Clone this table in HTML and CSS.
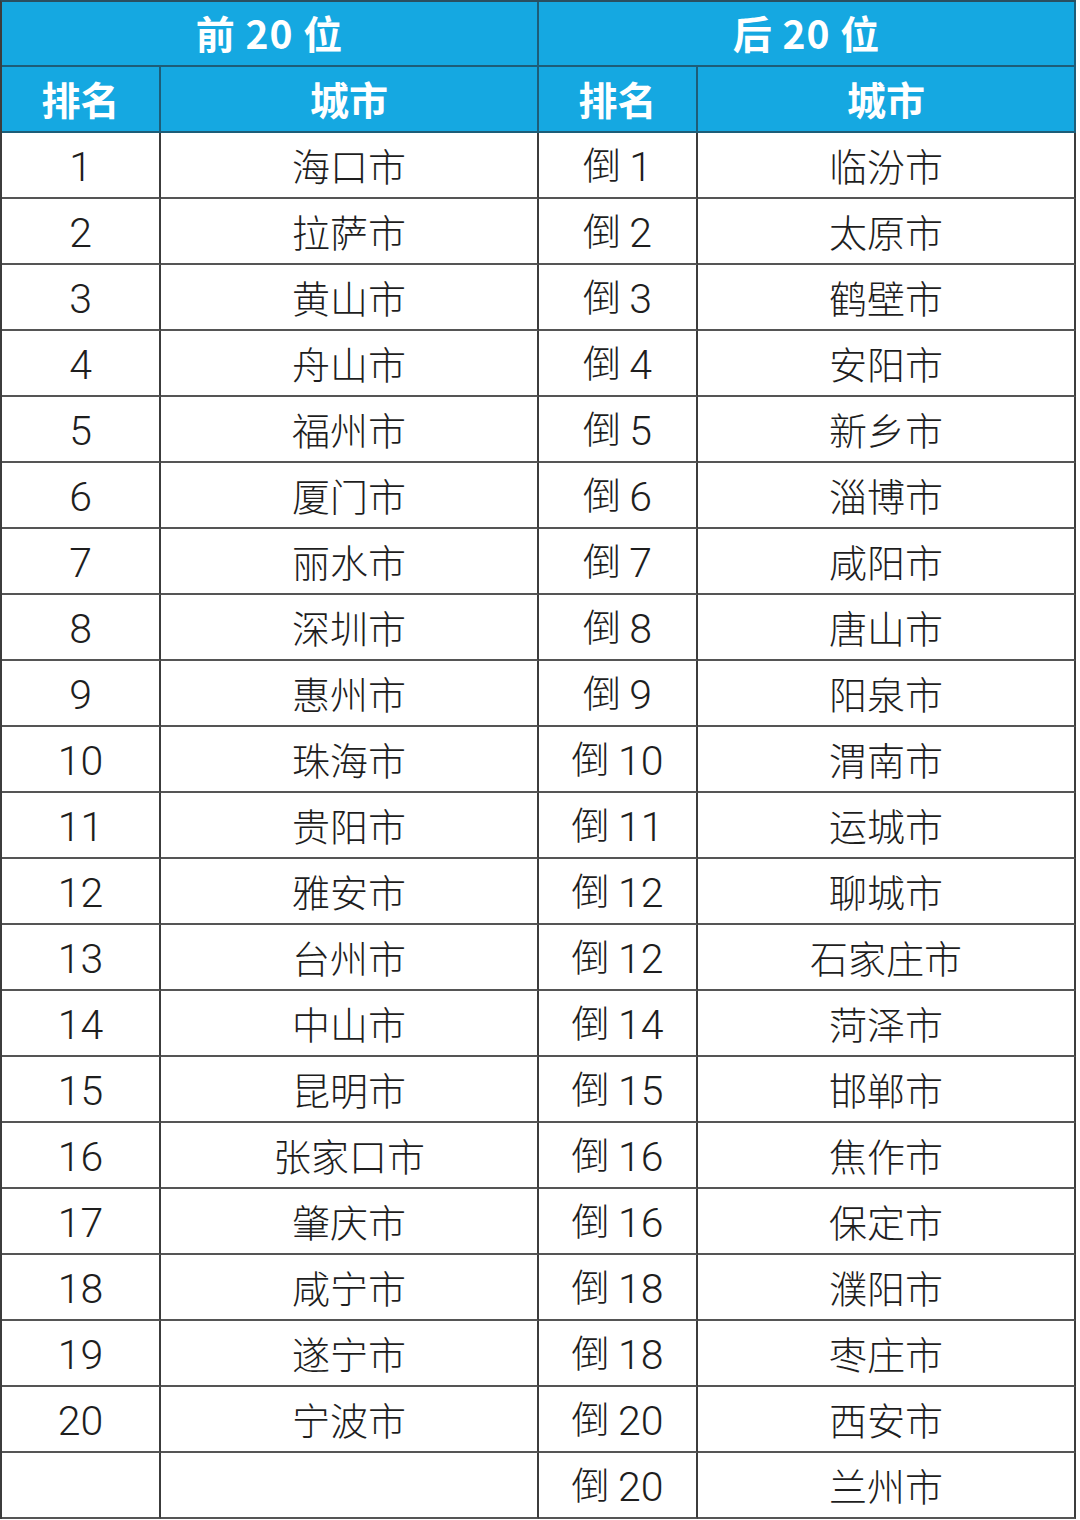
FILE: index.html
```html
<!DOCTYPE html>
<html lang="zh-CN">
<head>
<meta charset="utf-8">
<title>排名</title>
<link rel="stylesheet" href="styles.css">
</head>
<body>
<div class="grid">
  <div class="cell title span2">前 20 位</div>
  <div class="cell title span2">后 20 位</div>
  <div class="cell head">排名</div>
  <div class="cell head">城市</div>
  <div class="cell head">排名</div>
  <div class="cell head">城市</div>

  <div class="cell"><span class="n">1</span></div><div class="cell">海口市</div><div class="cell"><span>倒 <span class="n">1</span></span></div><div class="cell">临汾市</div>
  <div class="cell"><span class="n">2</span></div><div class="cell">拉萨市</div><div class="cell"><span>倒 <span class="n">2</span></span></div><div class="cell">太原市</div>
  <div class="cell"><span class="n">3</span></div><div class="cell">黄山市</div><div class="cell"><span>倒 <span class="n">3</span></span></div><div class="cell">鹤壁市</div>
  <div class="cell"><span class="n">4</span></div><div class="cell">舟山市</div><div class="cell"><span>倒 <span class="n">4</span></span></div><div class="cell">安阳市</div>
  <div class="cell"><span class="n">5</span></div><div class="cell">福州市</div><div class="cell"><span>倒 <span class="n">5</span></span></div><div class="cell">新乡市</div>
  <div class="cell"><span class="n">6</span></div><div class="cell">厦门市</div><div class="cell"><span>倒 <span class="n">6</span></span></div><div class="cell">淄博市</div>
  <div class="cell"><span class="n">7</span></div><div class="cell">丽水市</div><div class="cell"><span>倒 <span class="n">7</span></span></div><div class="cell">咸阳市</div>
  <div class="cell"><span class="n">8</span></div><div class="cell">深圳市</div><div class="cell"><span>倒 <span class="n">8</span></span></div><div class="cell">唐山市</div>
  <div class="cell"><span class="n">9</span></div><div class="cell">惠州市</div><div class="cell"><span>倒 <span class="n">9</span></span></div><div class="cell">阳泉市</div>
  <div class="cell"><span class="n">10</span></div><div class="cell">珠海市</div><div class="cell"><span>倒 <span class="n">10</span></span></div><div class="cell">渭南市</div>
  <div class="cell"><span class="n">11</span></div><div class="cell">贵阳市</div><div class="cell"><span>倒 <span class="n">11</span></span></div><div class="cell">运城市</div>
  <div class="cell"><span class="n">12</span></div><div class="cell">雅安市</div><div class="cell"><span>倒 <span class="n">12</span></span></div><div class="cell">聊城市</div>
  <div class="cell"><span class="n">13</span></div><div class="cell">台州市</div><div class="cell"><span>倒 <span class="n">12</span></span></div><div class="cell">石家庄市</div>
  <div class="cell"><span class="n">14</span></div><div class="cell">中山市</div><div class="cell"><span>倒 <span class="n">14</span></span></div><div class="cell">菏泽市</div>
  <div class="cell"><span class="n">15</span></div><div class="cell">昆明市</div><div class="cell"><span>倒 <span class="n">15</span></span></div><div class="cell">邯郸市</div>
  <div class="cell"><span class="n">16</span></div><div class="cell">张家口市</div><div class="cell"><span>倒 <span class="n">16</span></span></div><div class="cell">焦作市</div>
  <div class="cell"><span class="n">17</span></div><div class="cell">肇庆市</div><div class="cell"><span>倒 <span class="n">16</span></span></div><div class="cell">保定市</div>
  <div class="cell"><span class="n">18</span></div><div class="cell">咸宁市</div><div class="cell"><span>倒 <span class="n">18</span></span></div><div class="cell">濮阳市</div>
  <div class="cell"><span class="n">19</span></div><div class="cell">遂宁市</div><div class="cell"><span>倒 <span class="n">18</span></span></div><div class="cell">枣庄市</div>
  <div class="cell"><span class="n">20</span></div><div class="cell">宁波市</div><div class="cell"><span>倒 <span class="n">20</span></span></div><div class="cell">西安市</div>
  <div class="cell"></div><div class="cell"></div><div class="cell"><span>倒 <span class="n">20</span></span></div><div class="cell">兰州市</div>
</div>
</body>
</html>
```
FILE: styles.css
```css
html, body {
  margin: 0;
  padding: 0;
  background: #ffffff;
}

.grid {
  display: grid;
  grid-template-columns: 159px 378px 159px 378px;
  grid-template-rows: 65px repeat(22, 66px);
  width: 1074px;
  border-left: 2px solid #3c3c3c;
  border-top: 2px solid #2a4f60;
  font-family: "Noto Sans CJK SC", "Noto Sans", sans-serif;
  font-weight: 300;
  color: #1e1e1e;
}

.cell {
  box-sizing: border-box;
  border-right: 2px solid #3c3c3c;
  border-bottom: 2px solid #555555;
  display: flex;
  align-items: center;
  justify-content: center;
  font-size: 38px;
  line-height: 1;
}

.n {
  font-family: Roboto, "Liberation Sans", sans-serif;
  font-weight: 300;
  font-size: 41px;
  position: relative;
  top: 2px;
}

.span2 {
  grid-column: span 2;
}

.title,
.head {
  background: #15a8e1;
  color: #ffffff;
  font-weight: 700;
  font-size: 39px;
  padding-bottom: 2px;
  border-right-color: #1d5d78;
  border-bottom-color: #1d5d78;
}

.title {
  letter-spacing: 1px;
}
```
